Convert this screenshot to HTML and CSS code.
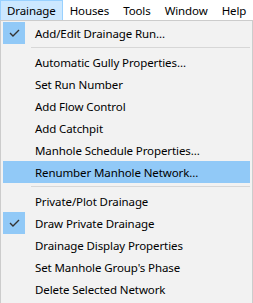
FILE: index.html
```html
<!DOCTYPE html>
<html>
    <head>
        <title>Drainage menu</title>
        <link rel="stylesheet" href="styles.css">
    </head>
    <body>
        <div class="menubar">
            <span class="menu-title open">Drainage</span>
            <span class="menu-title">Houses</span>
            <span class="menu-title">Tools</span>
            <span class="menu-title">Window</span>
            <span class="menu-title">Help</span>
        </div>
        <div class="dropdown">
            <div class="item checked"><span class="check"><svg width="11" height="8" viewBox="0 0 11 8"><path d="M1 4 L4 7 L10 1" fill="none" stroke="#333" stroke-width="1.4"/></svg></span>Add/Edit Drainage Run...</div>
            <div class="sep"></div>
            <div class="item"><span class="check"></span>Automatic Gully Properties...</div>
            <div class="item"><span class="check"></span>Set Run Number</div>
            <div class="item"><span class="check"></span>Add Flow Control</div>
            <div class="item"><span class="check"></span>Add Catchpit</div>
            <div class="item"><span class="check"></span>Manhole Schedule Properties...</div>
            <div class="item hover"><span class="check"></span>Renumber Manhole Network...</div>
            <div class="sep"></div>
            <div class="item"><span class="check"></span>Private/Plot Drainage</div>
            <div class="item checked"><span class="check"><svg width="11" height="8" viewBox="0 0 11 8"><path d="M1 4 L4 7 L10 1" fill="none" stroke="#333" stroke-width="1.4"/></svg></span>Draw Private Drainage</div>
            <div class="item"><span class="check"></span>Drainage Display Properties</div>
            <div class="item"><span class="check"></span>Set Manhole Group's Phase</div>
            <div class="item"><span class="check"></span>Delete Selected Network</div>
        </div>
    </body>
</html>
```
FILE: styles.css
```css
body {
    margin: 0;
    width: 253px;
    height: 303px;
    overflow: hidden;
    background: #fff;
    font-family: "Noto Sans", sans-serif;
    font-size: 11.5px;
    letter-spacing: -0.1px;
    color: #000;
}

.menubar {
    display: flex;
    height: 20px;
    background: #fff;
}

.menu-title {
    display: flex;
    align-items: center;
    padding: 0 6px;
    border: 1px solid transparent;
    border-bottom: 0;
}

.menu-title.open {
    background: #cce8ff;
    border-color: #99d1ff;
}

.dropdown {
    border: 1px solid #cccccc;
    background: #f2f2f2;
    padding: 1px 2px;
    height: 280px;
}

.item {
    display: flex;
    align-items: center;
    height: 22px;
    white-space: nowrap;
}

.item.hover {
    background: #91c9f7;
}

.check {
    width: 22px;
    height: 22px;
    margin-right: 10px;
    display: flex;
    align-items: center;
    justify-content: center;
}

.item.checked .check {
    background: #91c9f7;
}

.sep {
    height: 7px;
    display: flex;
    align-items: center;
    margin-left: 28px;
}

.sep::after {
    content: "";
    flex: 1;
    height: 1px;
    background: #d7d7d7;
}
```
